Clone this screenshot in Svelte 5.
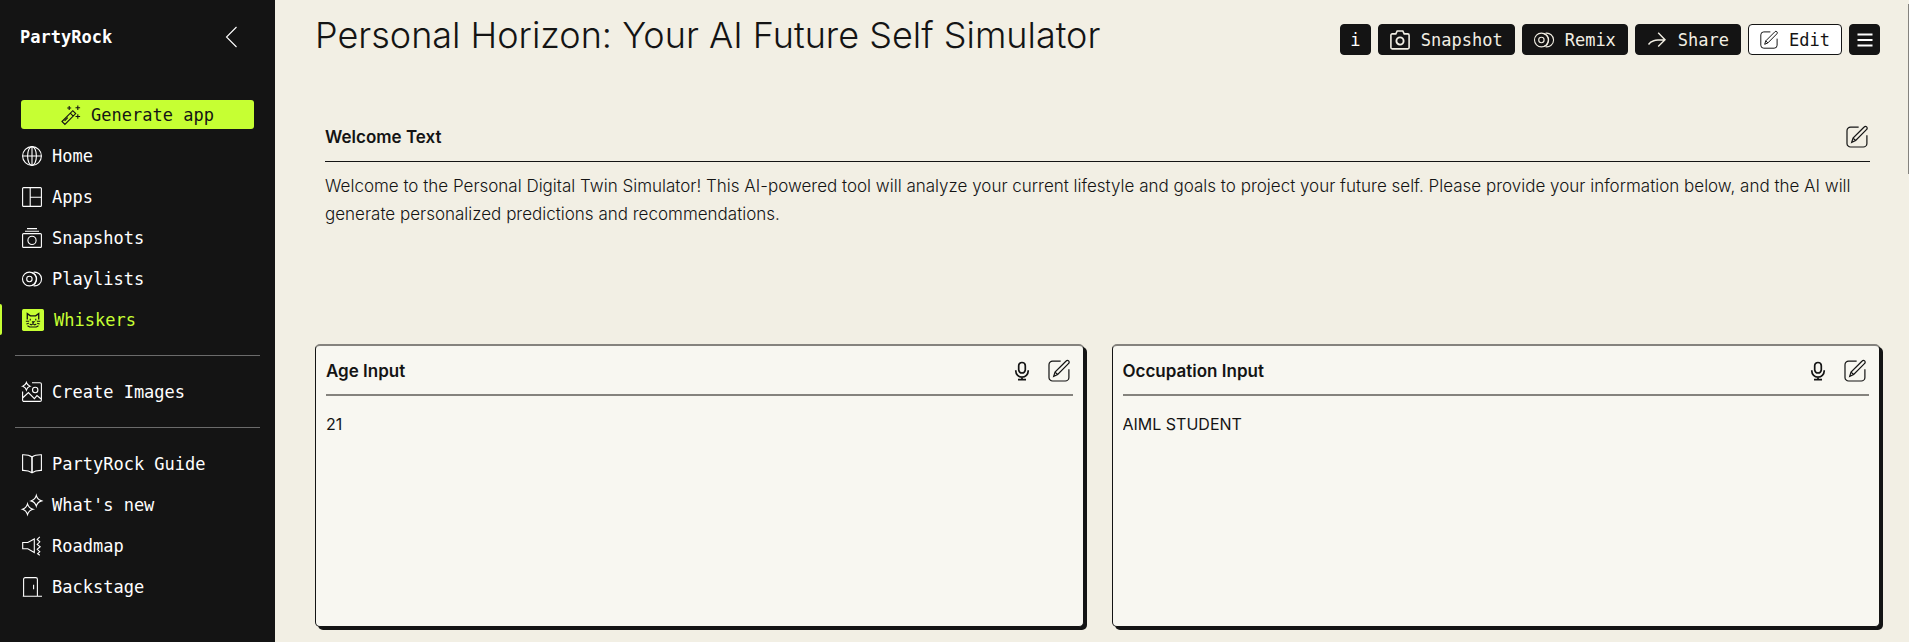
<script>
  const groups = [
    [
      { icon: 'globe', label: 'Home' },
      { icon: 'apps', label: 'Apps' },
      { icon: 'snapshots', label: 'Snapshots' },
      { icon: 'discs', label: 'Playlists' },
      { icon: 'cat', label: 'Whiskers', active: true }
    ],
    [{ icon: 'image', label: 'Create Images' }],
    [
      { icon: 'book', label: 'PartyRock Guide' },
      { icon: 'sparkles', label: "What's new" },
      { icon: 'horn', label: 'Roadmap' },
      { icon: 'door', label: 'Backstage' }
    ]
  ];

  let fields = $state([
    { id: 'age', title: 'Age Input', value: '21' },
    { id: 'occupation', title: 'Occupation Input', value: 'AIML STUDENT' }
  ]);
</script>

{#snippet icon(name, size = 20)}
  <svg class="icon" width={size} height={size} viewBox="0 0 20 20" aria-hidden="true">
    {#if name === 'globe'}
      <circle cx="10" cy="10" r="9.4" /><ellipse cx="10" cy="10" rx="4.4" ry="9.4" />
      <path d="M10 .6v18.8M.6 10h18.8" />
    {:else if name === 'apps'}
      <rect x=".6" y=".6" width="18.8" height="18.8" rx="1" /><path d="M8.2 .6v18.8M8.2 10.3h11.2" />
    {:else if name === 'snapshots'}
      <rect x=".6" y="5.6" width="18.8" height="13.8" rx="1" /><circle cx="10" cy="12.4" r="4.1" />
      <path d="M3 3.3h14M5 .6h10" />
    {:else if name === 'discs'}
      <circle cx="7.4" cy="10" r="6.9" /><circle cx="7.4" cy="10" r="2.7" />
      <path d="M9.6 3.4c3.200 1 5 3.500 5 6.600s-1.800 5.600-5 6.600M11.500 3.200a6.900 6.900 0 1 1 0 13.600" />
    {:else if name === 'image'}
      <path d="M10 .7h8a1.4 1.4 0 0 1 1.4 1.4V18a1.4 1.4 0 0 1-1.4 1.4H2A1.4 1.4 0 0 1 .6 18V9.5M.6 16l5.800-5.400 6 6 2.600-3 4.400 3.600" />
      <circle cx="13.2" cy="8" r="2.7" />
      <path d="M4.4 .5Q5.3 3.3 8 4.2 5.3 5.2 4.4 8 3.5 5.2.7 4.2 3.5 3.3 4.4.5z" />
    {:else if name === 'book'}
      <path d="M10 3C7.600 1.200 4.600.7.6.8v15.600c4-.1 7 .6 9.400 2.400 2.400-1.800 5.400-2.500 9.400-2.400V.8C15.400.7 12.400 1.200 10 3zv15.500" />
      <path d="M10 3v15.500" />
    {:else if name === 'sparkles'}
      <path d="M5.500 8.800Q6.700 13 11 14.200 6.700 15.400 5.500 19.500 4.300 15.400.4 14.200 4.300 13 5.500 8.800zM14.300.4Q15.400 4.600 19.600 5.900 15.400 7.100 14.300 11.200 13.100 7.100 9 5.900 13.100 4.600 14.300.4z" />
    {:else if name === 'horn'}
      <path d="M.7 6.500h5.100L12.300 3v13.500l-6.500-3.700H.7zM17.800.8l-2.600 2.600 2.600 2.400-2.600 2.600 3 2.300-3 2.600 2.600 2.400-2.200 2 2.200 1.500" />
    {:else if name === 'door'}
      <path d="M1.600 19.300V2.200A1.600 1.600 0 0 1 3.200.6h10.600a1.600 1.600 0 0 1 1.600 1.600v17.100M.8 19.300H20M11.600 7.800v4.400" />
    {:else if name === 'wand'}
      <path d="M1 16.500 11.800 5.700l2.900 2.900L3.900 19.400zM9.300 8.200l2.900 2.900M3.600 15.800l3.200-3.200M8.200 1v4M6.200 3h4M16.800.5v4.600M14.500 2.800h4.600M16.800 9.200v4.600M14.500 11.500h4.600" />
    {:else if name === 'camera'}
      <path d="M5.800 3.900 7.200 1h5.600l1.400 2.900h3.600a1.300 1.300 0 0 1 1.300 1.300v12.400a1.300 1.300 0 0 1-1.300 1.300H2.200a1.300 1.300 0 0 1-1.300-1.300V5.200a1.300 1.300 0 0 1 1.300-1.300z" stroke-width="1.600" />
      <circle cx="10" cy="11" r="3.600" stroke-width="1.900" />
    {:else if name === 'share'}
      <path d="M1.500 14.500C4 10.800 7.500 9.700 18 9.800M11.200 2.800 18 9.800l-6.800 6.800" stroke-width="1.400" />
    {:else if name === 'edit'}
      <path d="M11.500 1H4.200A3.300 3.300 0 0 0 .9 4.300v11.500a3.300 3.300 0 0 0 3.300 3.300h11.500a3.300 3.300 0 0 0 3.300-3.300V8.500" />
      <path d="M5.200 14.800 6.400 11 16.500.9a1.500 1.500 0 0 1 2.300 2.200L8.800 13.200zM6.400 11l2.400 2.200" />
    {:else if name === 'mic'}
      <g stroke-width="1.700"><rect x="6.700" y="1.500" width="6.600" height="10.500" rx="3.300" /><path d="M3.800 9.200v.7a6.200 6.200 0 0 0 12.400 0v-.7M10 16.100v2.700M6 18.700h8" /></g>
    {:else if name === 'menu'}
      <path d="M2.500 4.500h15M2.500 10h15M2.500 15.500h15" stroke-width="2" />
    {:else if name === 'back'}
      <path d="M14.500 0 4.500 10l10 10" />
    {:else if name === 'cat'}
      <rect width="20" height="20" rx="1.500" fill="#c6ff33" stroke="none" />
      <path d="M4.800 9.500V4.200l2.800 2h4.800l2.800-2v5.300" stroke="#141414" stroke-width="1.200" />
      <path d="M3.500 11.200h3M13.500 11.200h3M4 13.700l2.200-.7M16 13.700l-2.200-.7M7.500 8.800v1.600M12.500 8.800v1.600M9 11.700h2l-1 1v1M7 13.700l1.400.8 1.600-1 1.600 1 1.400-.8M5 15.200l2 1.100h6l2-1.100" stroke="#141414" stroke-width="1" />
    {/if}
  </svg>
{/snippet}

<div class="page">
  <aside class="sidebar">
    <div class="brand">
      <a class="logo" href="#home">PartyRock</a>
      <button class="plain" aria-label="Collapse menu">{@render icon('back')}</button>
    </div>
    <button class="generate">{@render icon('wand')}<span>Generate app</span></button>
    <nav>
      {#each groups as group}
        <ul>
          {#each group as item}
            <li>
              <a href="#{item.icon}" class:active={item.active}>
                {@render icon(item.icon, item.active ? 22 : 20)}<span>{item.label}</span>
              </a>
            </li>
          {/each}
        </ul>
      {/each}
    </nav>
  </aside>

  <main>
    <header>
      <h1>Personal Horizon: Your AI Future Self Simulator</h1>
      <div class="actions">
        <button class="square" aria-label="Info">i</button>
        <button>{@render icon('camera')}<span>Snapshot</span></button>
        <button>{@render icon('discs')}<span>Remix</span></button>
        <button>{@render icon('share')}<span>Share</span></button>
        <button class="light">{@render icon('edit', 18)}<span>Edit</span></button>
        <button class="square" aria-label="Menu">{@render icon('menu')}</button>
      </div>
    </header>

    <section class="welcome">
      <div class="head">
        <h2>Welcome Text</h2>
        <button class="plain" aria-label="Edit Welcome Text">{@render icon('edit', 22)}</button>
      </div>
      <p>
        Welcome to the Personal Digital Twin Simulator! This AI-powered tool will analyze your current
        lifestyle and goals to project your future self. Please provide your information below, and the AI
        will generate personalized predictions and recommendations.
      </p>
    </section>

    <div class="cards">
      {#each fields as field}
        <section class="card">
          <div class="head">
            <h2><label for={field.id}>{field.title}</label></h2>
            <div class="tools">
              <button class="plain" aria-label="Dictate {field.title}">{@render icon('mic')}</button>
              <button class="plain" aria-label="Edit {field.title}">{@render icon('edit', 22)}</button>
            </div>
          </div>
          <textarea id={field.id} bind:value={field.value}></textarea>
        </section>
      {/each}
    </div>
    <div class="thumb"></div>
  </main>
</div>

<style>
  :global(body) {
    background: #f2efe4;
  }
  .page {
    display: grid;
    grid-template-columns: 275px minmax(0, 1fr);
    min-height: 100vh;
    color: #141414;
    font-family: Inter, sans-serif;
    font-size: 16px;
  }
  .page * {
    box-sizing: border-box;
  }
  .icon {
    display: block;
    flex: none;
    fill: none;
    stroke: currentColor;
    stroke-width: 1.1;
    overflow: visible;
  }
  button {
    font: inherit;
    color: inherit;
    cursor: pointer;
  }
  .plain {
    padding: 0;
    border: 0;
    background: none;
  }
  .sidebar {
    background: #141414;
    color: #fff;
    font: 17px/24px 'DejaVu Sans Mono', monospace;
  }
  .brand {
    display: flex;
    align-items: center;
    justify-content: space-between;
    height: 73px;
    padding: 0 33px 0 20px;
  }
  .logo {
    color: #fff;
    font-weight: 700;
    text-decoration: none;
  }
  .generate {
    display: flex;
    align-items: center;
    justify-content: center;
    gap: 10px;
    width: calc(100% - 42px);
    height: 29px;
    margin: 27px 21px 6px;
    padding: 0;
    border: 0;
    border-radius: 3px;
    background: #c6ff33;
    color: #141414;
  }
  ul {
    margin: 0;
    padding: 0;
    list-style: none;
  }
  ul + ul {
    position: relative;
    margin-top: 15px;
    padding-top: 16px;
  }
  ul + ul::before {
    content: '';
    position: absolute;
    top: 0;
    left: 15px;
    right: 15px;
    height: 1px;
    background: #6b6b6b;
  }
  li a {
    display: flex;
    align-items: center;
    gap: 10px;
    height: 41px;
    padding-left: 22px;
    color: #fff;
    text-decoration: none;
  }
  li a.active {
    position: relative;
    color: #c6ff33;
  }
  li a.active::before {
    content: '';
    position: absolute;
    left: 0;
    top: 5px;
    bottom: 5px;
    width: 2px;
    background: #c6ff33;
    border-radius: 0 2px 2px 0;
  }
  main {
    position: relative;
    padding: 0 29px 12px 40px;
  }
  header {
    display: flex;
    align-items: center;
    justify-content: space-between;
    height: 79px;
    margin-bottom: 33px;
  }
  h1 {
    margin: 0 0 10px;
    font-size: 36px;
    line-height: 44px;
    font-weight: 300;
  }
  .actions {
    display: flex;
    gap: 7px;
    font: 17px/24px 'DejaVu Sans Mono', monospace;
  }
  .actions button {
    display: flex;
    align-items: center;
    justify-content: center;
    gap: 11px;
    height: 31px;
    padding: 0 11px;
    border: 1px solid #141414;
    border-radius: 4px;
    background: #141414;
    color: #f2efe4;
  }
  .actions .light {
    background: #fff;
    color: #141414;
  }
  .actions .square {
    width: 31px;
    padding: 0;
    color: #fff;
  }
  .head {
    display: flex;
    align-items: center;
    justify-content: space-between;
    height: 50px;
    border-bottom: 1px solid #141414;
  }
  h2 {
    margin: 0;
    font-size: 17px;
    line-height: 24px;
    font-weight: 600;
  }
  .welcome {
    height: 232px;
    padding: 0 10px;
  }
  .welcome .plain {
    padding-right: 2px;
  }
  p {
    margin: 10px 0 0;
    font-size: 17px;
    line-height: 28px;
    font-weight: 300;
  }
  .cards {
    display: grid;
    grid-template-columns: 1fr 1fr;
    gap: 28px;
  }
  .card {
    display: flex;
    flex-direction: column;
    min-height: 283px;
    padding: 0 10px 10px;
    border: 1px solid #141414;
    border-top: 2px solid #85837e;
    border-radius: 5px;
    background: #f8f7f1;
    box-shadow: 3px 3px 0 #141414;
  }
  .card .head {
    padding-top: 1px;
    border-bottom: 2px solid #85837e;
  }
  .tools {
    display: flex;
    align-items: center;
    gap: 16px;
    padding-right: 3px;
  }
  textarea {
    flex: 1;
    width: 100%;
    margin-top: 16px;
    padding: 0;
    border: 0;
    outline: 0;
    background: none;
    color: #141414;
    font: 16px/24px Inter, sans-serif;
    resize: none;
  }
  .thumb {
    position: absolute;
    top: 4px;
    right: 0;
    width: 1px;
    height: 170px;
    background: #85837e;
  }
</style>
